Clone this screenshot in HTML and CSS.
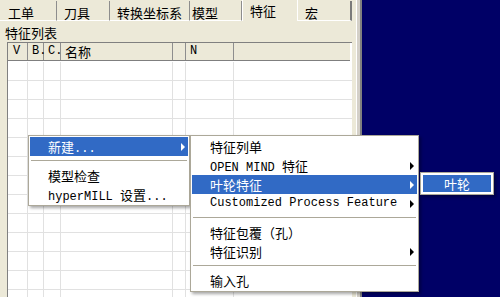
FILE: index.html
```html
<!DOCTYPE html>
<html lang="zh-CN">
<head>
    <meta charset="UTF-8">
    <title>hyperMILL</title>
    <link rel="stylesheet" href="styles.css">
</head>
<body>
<div id="screen">
    <div id="panel">
        <div class="tabs">
            <div class="tab">工单</div>
            <div class="tab">刀具</div>
            <div class="tab">转换坐标系</div>
            <div class="tab">模型</div>
            <div class="tab active">特征</div>
            <div class="tab">宏</div>
        </div>
        <div class="tab-body">
            <div class="caption">特征列表</div>
            <div class="list">
                <div class="list-head">
                    <div>V</div>
                    <div>B.</div>
                    <div>C.</div>
                    <div class="zh">名称</div>
                    <div></div>
                    <div>N</div>
                    <div></div>
                </div>
                <div class="list-rows">
                    <div class="row"><i></i><i></i><i></i><i></i><i></i><i></i><i></i></div>
                    <div class="row"><i></i><i></i><i></i><i></i><i></i><i></i><i></i></div>
                    <div class="row"><i></i><i></i><i></i><i></i><i></i><i></i><i></i></div>
                    <div class="row"><i></i><i></i><i></i><i></i><i></i><i></i><i></i></div>
                    <div class="row"><i></i><i></i><i></i><i></i><i></i><i></i><i></i></div>
                    <div class="row"><i></i><i></i><i></i><i></i><i></i><i></i><i></i></div>
                    <div class="row"><i></i><i></i><i></i><i></i><i></i><i></i><i></i></div>
                    <div class="row"><i></i><i></i><i></i><i></i><i></i><i></i><i></i></div>
                    <div class="row"><i></i><i></i><i></i><i></i><i></i><i></i><i></i></div>
                    <div class="row"><i></i><i></i><i></i><i></i><i></i><i></i><i></i></div>
                    <div class="row"><i></i><i></i><i></i><i></i><i></i><i></i><i></i></div>
                    <div class="row"><i></i><i></i><i></i><i></i><i></i><i></i><i></i></div>
                    <div class="row"><i></i><i></i><i></i><i></i><i></i><i></i><i></i></div>
                </div>
            </div>
        </div>
    </div>
    <div id="split"></div>
    <div id="desk"></div>

    <!-- context menu and its open submenus -->
    <div class="menu" id="menu-main">
        <div class="item sub hot"><span class="zh">新建</span>...</div>
        <div class="sep"></div>
        <div class="item"><span class="zh">模型检查</span></div>
        <div class="item">hyperMILL <span class="zh">设置</span>...</div>
    </div>

    <div class="menu" id="menu-new">
        <div class="item"><span class="zh">特征列单</span></div>
        <div class="item sub">OPEN MIND <span class="zh">特征</span></div>
        <div class="item sub hot"><span class="zh">叶轮特征</span></div>
        <div class="item sub">Customized Process Feature</div>
        <div class="sep"></div>
        <div class="item"><span class="zh">特征包覆（孔）</span></div>
        <div class="item sub"><span class="zh">特征识别</span></div>
        <div class="sep"></div>
        <div class="item"><span class="zh">输入孔</span></div>
    </div>

    <div class="menu" id="menu-impeller">
        <div class="item hot"><span class="zh">叶轮</span></div>
    </div>
</div>
</body>
</html>
```

FILE: styles.css
```css
body {
    margin: 0;
    background: #000066;
    font-family: "Noto Sans CJK SC", sans-serif;
    overflow: hidden;
}
#screen {
    position: relative;
    display: flex;
    width: 500px;
    height: 297px;
    overflow: hidden;
}
#panel {
    width: 356px;
    background: #ece9d8;
    display: flex;
    flex-direction: column;
}
#split {
    width: 6px;
    box-sizing: border-box;
    background: #d4d0c8;
    border-left: 1px solid #fff;
    border-right: 2px solid #808080;
}
#desk {
    flex: 1;
    background: #000066;
}

/* tabs */
.tabs {
    display: flex;
    align-items: flex-end;
    height: 21px;
}
.tab {
    box-sizing: border-box;
    height: 20px;
    padding: 3px 0 0 7px;
    font-size: 13px;
    line-height: 17px;
    color: #000;
    border-right: 1px solid #8d8d8d;
    border-bottom: 1px solid #fff;
}
.tab.active {
    height: 21px;
    padding-top: 2px;
    border-bottom: none;
    border-left: 1px solid #fff;
    border-right: 1px solid #fff;
}
.tab:nth-child(1) { width: 57px; padding-left: 8px; }
.tab:nth-child(2) { width: 53px; }
.tab:nth-child(3) { width: 80px; }
.tab:nth-child(4) { width: 52px; padding-left: 2px; }
.tab:nth-child(5) { width: 56px; }
.tab:nth-child(6) { width: 54px; border-right: 2px solid #7a7a7a; }

.tab-body {
    flex: 1;
    display: flex;
    flex-direction: column;
    padding-right: 4px;
    min-height: 0;
}
.caption {
    box-sizing: border-box;
    height: 21px;
    padding: 3px 0 0 5px;
    font-size: 13px;
    line-height: 17px;
}

/* feature list */
.list {
    flex: 1;
    margin-left: 7px;
    background: #fff;
    border-top: 1px solid #808080;
    border-left: 1px solid #808080;
    overflow: hidden;
}
.list-head, .row {
    display: grid;
    grid-template-columns: 20px 16px 17px 112px 13px 48px 1fr;
}
.list-head {
    height: 18px;
    box-sizing: border-box;
    background: #ece9d8;
    border-bottom: 1px solid #7f7f7f;
    margin-right: 2px;
}
.list-head div {
    box-sizing: border-box;
    border-right: 1px solid #8e8e8e;
    padding-left: 4px;
    font-family: "Liberation Mono", monospace;
    font-size: 12px;
    line-height: 17px;
    color: #000;
}
.list-head div:first-child { padding-left: 5px; }
.list-head div:last-child { border-right: none; }
.list-head .zh {
    font-family: "Noto Sans CJK SC", sans-serif;
    font-size: 13px;
}
.list-rows {
    padding-top: 1px;
}
.row {
    height: 19px;
    box-sizing: border-box;
    border-bottom: 1px solid #e1e1e1;
}
.row i {
    border-right: 1px solid #e1e1e1;
}
.row i:last-child { border-right: none; }

/* menus */
.menu {
    position: absolute;
    box-sizing: border-box;
    background: #fff;
    border: 1px solid #aca899;
    padding: 1px;
    box-shadow: 2px 2px 3px rgba(0, 0, 0, 0.35);
    font-family: "Liberation Mono", "Noto Sans CJK SC", monospace;
    font-size: 12px;
    color: #000;
}
#menu-main {
    left: 28px;
    top: 135px;
    width: 162px;
}
#menu-new {
    left: 190px;
    top: 135px;
    width: 229px;
}
#menu-impeller {
    left: 420px;
    top: 172px;
    width: 74px;
    padding: 2px;
}
.item {
    position: relative;
    height: 19px;
    line-height: 19px;
    padding-left: 18px;
    white-space: nowrap;
}
.item .zh {
    font-family: "Noto Sans CJK SC", sans-serif;
    font-size: 13px;
}
.item.hot {
    background: #316ac5;
    color: #fff;
}
.item.sub::after {
    content: "";
    position: absolute;
    right: 3px;
    top: 6px;
    border-left: 4px solid #000;
    border-top: 4px solid transparent;
    border-bottom: 4px solid transparent;
}
.item.sub.hot::after {
    border-left-color: #fff;
}
#menu-impeller .item {
    height: 17px;
    line-height: 17px;
    padding-left: 0;
    text-align: center;
}
.sep {
    height: 1px;
    margin: 4px 1px 5px;
    background: #aca899;
}
```
